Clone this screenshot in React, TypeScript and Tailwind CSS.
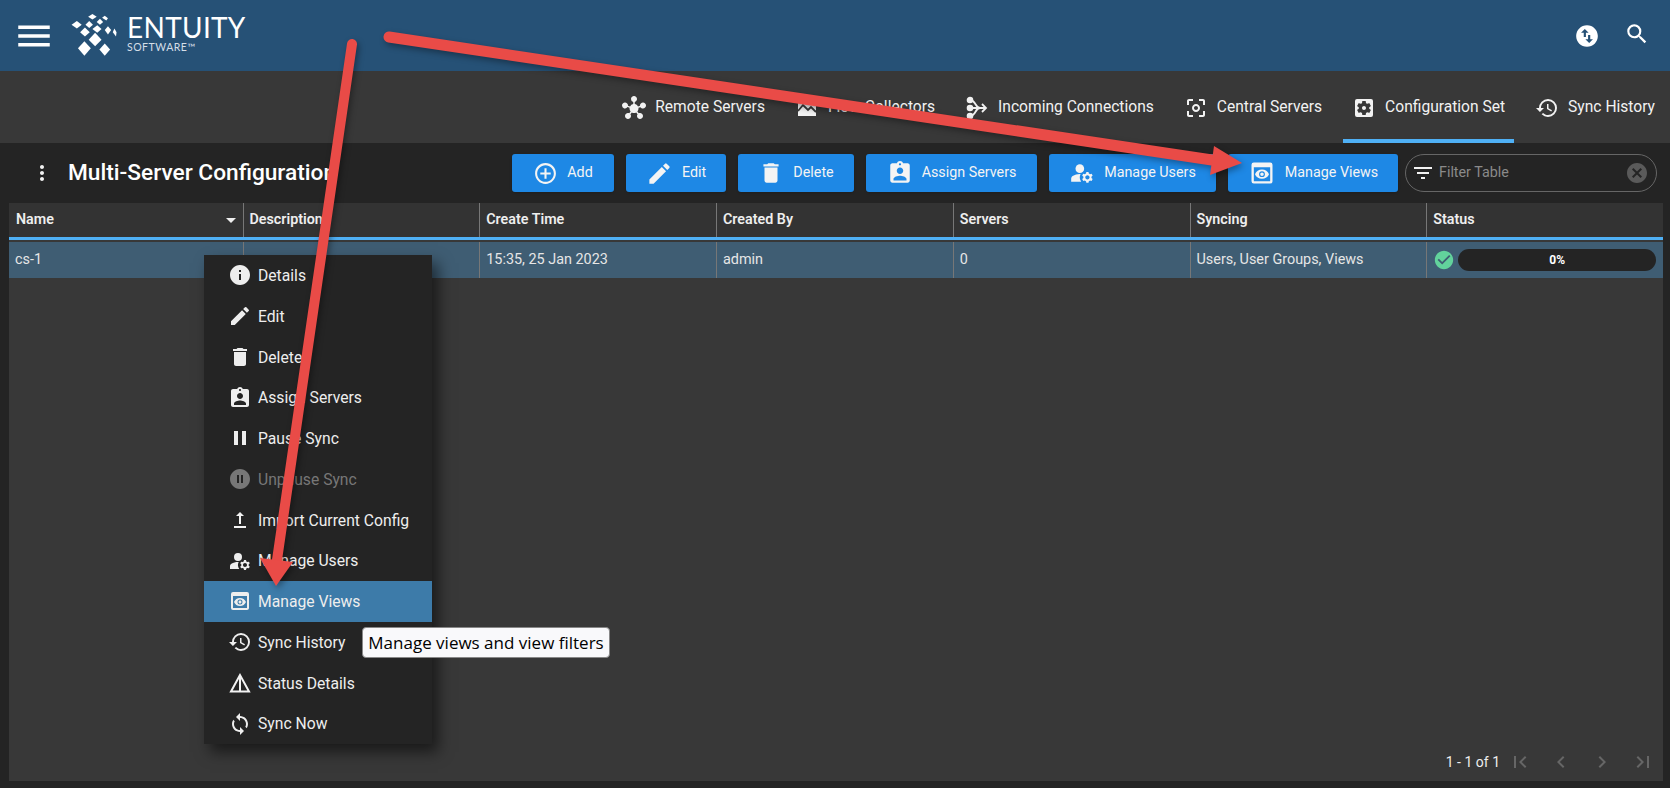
import type { ReactNode } from 'react';
import {
  MdMenu,
  MdSwapVerticalCircle,
  MdSearch,
  MdHub,
  MdCenterFocusWeak,
  MdSettingsApplications,
  MdHistory,
  MdMoreVert,
  MdAddCircleOutline,
  MdEdit,
  MdDelete,
  MdAssignmentInd,
  MdManageAccounts,
  MdPreview,
  MdFilterList,
  MdCancel,
  MdArrowDropDown,
  MdCheckCircle,
  MdInfo,
  MdPause,
  MdPauseCircleFilled,
  MdSync,
  MdFirstPage,
  MdLastPage,
  MdChevronLeft,
  MdChevronRight,
} from 'react-icons/md';

const FlowIcon = () => (
  <svg viewBox="0 0 24 24" className="w-6 h-6">
    <path d="M3 4h18v16H3z" fill="#f2f2f2" />
    <path d="M3 15l5-6 5 5 3-3 5 5" fill="none" stroke="#383838" strokeWidth="1.8" />
  </svg>
);

const IncomingIcon = () => (
  <svg viewBox="0 0 24 24" className="w-6 h-6" fill="none" stroke="#f2f2f2" strokeWidth="1.8">
    <circle cx="5" cy="4" r="2.4" fill="#f2f2f2" />
    <circle cx="5" cy="12" r="2.4" fill="#f2f2f2" />
    <circle cx="5" cy="20" r="2.4" fill="#f2f2f2" />
    <path d="M5 4c6 0 5 8 10 8M5 20c6 0 5-8 10-8M5 12h16M17 8l4 4-4 4" />
  </svg>
);

const ImportIcon = () => (
  <svg viewBox="0 0 24 24" className="w-6 h-6" fill="#f2f2f2">
    <path d="M12 4l-4 4h3v8h2V8h3z" />
    <path d="M6 18h12v2H6z" />
  </svg>
);

const StatusIcon = () => (
  <svg viewBox="0 0 24 24" className="w-6 h-6" fill="none" stroke="#f2f2f2" strokeWidth="2">
    <path d="M12 4L3 20.500h18zM12 5v15" />
  </svg>
);

const Logo = () => (
  <svg viewBox="0 0 60 56" className="w-[65px] h-[60px]" fill="#fff">
    <path d="M21.500 33l6 6.500-6 7-6-7z" />
    <path d="M40.500 35l5 5.500-5 6-5-6z" />
    <path d="M31.500 25l6 6.500-6 6-6-6z" />
    <path d="M22 20l4.500 4.500-4.500 4-4.500-4z" />
    <path d="M33.500 18l4 3.500-4 3.500-4.500-3.500z" />
    <path d="M43.500 19l3 3.500-3 4-3-4z" />
    <path d="M14.500 14l4.500 3.500-4.500 3.500-5-3.500z" />
    <path d="M26 14l3.500 3.500-3.500 3-3.500-3z" />
    <path d="M36 12l3 3-3 2.500-3-2.500z" />
    <path d="M49.500 21l2 3.500-.5 4-3-4z" />
    <path d="M29 7.500l4 2.500-4 2.500-4-2.500z" />
    <path d="M40.500 9l3 2.500-1.500 2-4-2.500z" />
  </svg>
);

const tabs = [
  { label: 'Remote Servers', icon: <MdHub size={24} /> },
  { label: 'Flow Collectors', icon: <FlowIcon /> },
  { label: 'Incoming Connections', icon: <IncomingIcon /> },
  { label: 'Central Servers', icon: <MdCenterFocusWeak size={24} /> },
  { label: 'Configuration Set', icon: <MdSettingsApplications size={24} />, active: true },
  { label: 'Sync History', icon: <MdHistory size={24} /> },
];

const buttons = [
  { label: 'Add', icon: <MdAddCircleOutline size={25} />, w: 'w-[102px]' },
  { label: 'Edit', icon: <MdEdit size={27} />, w: 'w-[100px]' },
  { label: 'Delete', icon: <MdDelete size={26} />, w: 'w-[116px]' },
  { label: 'Assign Servers', icon: <MdAssignmentInd size={26} />, w: 'w-[171px]' },
  { label: 'Manage Users', icon: <MdManageAccounts size={26} />, w: 'w-[167px]' },
  { label: 'Manage Views', icon: <MdPreview size={28} />, w: 'w-[170px]' },
];

const columns = ['Name', 'Description', 'Create Time', 'Created By', 'Servers', 'Syncing', 'Status'];

const menu: { label: string; icon: ReactNode; disabled?: boolean; hover?: boolean }[] = [
  { label: 'Details', icon: <MdInfo size={24} /> },
  { label: 'Edit', icon: <MdEdit size={24} /> },
  { label: 'Delete', icon: <MdDelete size={24} /> },
  { label: 'Assign Servers', icon: <MdAssignmentInd size={24} /> },
  { label: 'Pause Sync', icon: <MdPause size={24} /> },
  { label: 'Unpause Sync', icon: <MdPauseCircleFilled size={24} />, disabled: true },
  { label: 'Import Current Config', icon: <ImportIcon /> },
  { label: 'Manage Users', icon: <MdManageAccounts size={24} /> },
  { label: 'Manage Views', icon: <MdPreview size={24} />, hover: true },
  { label: 'Sync History', icon: <MdHistory size={24} /> },
  { label: 'Status Details', icon: <StatusIcon /> },
  { label: 'Sync Now', icon: <MdSync size={24} /> },
];

const Cell = ({ children, first }: { children?: ReactNode; first?: boolean }) => (
  <div className={`flex items-center min-w-0 pl-[6px] ${first ? '' : 'border-l border-[#777]'}`}>{children}</div>
);

export default function App() {
  return (
    <div className="relative w-[1670px] h-[788px] overflow-hidden flex flex-col bg-[#242424] text-[#f2f2f2] font-['Roboto',sans-serif]">
      {/* Top header */}
      <header className="h-[71px] shrink-0 bg-[#265176] flex items-center pl-[13px] pr-[20px]">
        <MdMenu size={42} className="text-white" />
        <div className="ml-[6px]"><Logo /></div>
        <div className="ml-[1px] -mt-1 flex flex-col leading-none font-['Lato',sans-serif] text-white">
          <span className="text-[28px] leading-[28px] tracking-[0.3px]">ENTUITY</span>
          <span className="text-[10.500px] leading-[13px] text-[#d5dfe8] tracking-[0.5px]">SOFTWARE™</span>
        </div>
        <div className="ml-auto flex items-center gap-[24px] text-white">
          <MdSwapVerticalCircle size={26} />
          <MdSearch size={26} className="-mt-[4px]" />
        </div>
      </header>

      {/* Tabs */}
      <nav className="h-[72px] shrink-0 bg-[#383838] flex justify-end items-stretch">
        {tabs.map((t) => (
          <div
            key={t.label}
            className={`flex items-center gap-[9px] px-[9px] pt-[6px] border-b-4 mx-[6px] text-[15.600px] ${t.active ? 'border-[#4fb0f5]' : 'border-transparent'}`}
          >
            {t.icon}
            <span>{t.label}</span>
          </div>
        ))}
      </nav>

      {/* Toolbar */}
      <div className="h-[60px] shrink-0 flex items-center pl-[30px] pr-[13px]">
        <MdMoreVert size={24} />
        <h1 className="ml-[14px] text-[22.700px] font-medium text-white">Multi-Server Configuration</h1>
        <div className="ml-auto flex items-center gap-3">
          {buttons.map((b) => (
            <button
              key={b.label}
              className={`${b.w} h-[38px] flex items-center justify-center gap-[9px] rounded-[3px] bg-[#1e88e5] text-[14.300px] text-[#f4f4f4] shadow`}
            >
              {b.icon}
              {b.label}
            </button>
          ))}
        </div>
        <div className="ml-[7px] w-[252px] h-[38px] flex items-center rounded-full border border-[#666] pl-[5px] pr-[7px]">
          <MdFilterList size={24} />
          <span className="ml-[4px] text-[14.300px] text-[#8a8a8a]">Filter Table</span>
          <MdCancel size={24} className="ml-auto text-[#5a5a5a]" />
        </div>
      </div>

      {/* Table */}
      <main className="flex-1 ml-[9px] mr-[7px] mb-[7px] bg-[#383838] flex flex-col min-h-0">
        <div className="h-[37px] shrink-0 bg-[#333] border-b-[3px] border-[#4fb0f5] grid grid-cols-[233.500px_repeat(6,1fr)] text-[14.300px] font-semibold text-[#eee]">
          {columns.map((c, i) => (
            <Cell key={c} first={i === 0}>
              <span className={i === 0 ? 'ml-px' : ''}>{c}</span>
              {i === 0 && <MdArrowDropDown size={24} className="ml-auto" />}
            </Cell>
          ))}
        </div>
        <div className="mt-[2px] h-[36px] shrink-0 bg-[#3f5d73] grid grid-cols-[233.500px_repeat(6,1fr)] text-[14.400px] text-[#e6e6e6]">
          <Cell first>cs-1</Cell>
          <Cell />
          <Cell>15:35, 25 Jan 2023</Cell>
          <Cell>admin</Cell>
          <Cell>0</Cell>
          <Cell>Users, User Groups, Views</Cell>
          <Cell>
            <MdCheckCircle size={22} className="text-[#62d29c] shrink-0" />
            <div className="ml-[3px] w-[198px] h-[22px] rounded-full bg-[#242424] flex items-center justify-center text-[12px] font-bold text-white">0%</div>
          </Cell>
        </div>
        <div className="mt-auto h-[38px] flex items-center justify-end text-[14px] text-[#eee] pr-[8px]">
          <span>1 - 1 of 1</span>
          <div className="ml-[8px] flex items-center gap-[17px] text-[#666]">
            <MdFirstPage size={24} />
            <MdChevronLeft size={24} />
            <MdChevronRight size={24} />
            <MdLastPage size={24} />
          </div>
        </div>
      </main>

      {/* Row context menu */}
      <div className="absolute left-[204px] top-[255px] w-[228px] bg-[#242424] shadow-[6px_8px_14px_rgba(0,0,0,0.55)] text-[15.700px]">
        {menu.map((m) => (
          <div
            key={m.label}
            className={`h-[40.750px] flex items-center gap-[6px] pl-[24px] ${m.hover ? 'bg-[#3d7ba9]' : ''} ${m.disabled ? 'text-[#777]' : 'text-[#eee]'}`}
          >
            {m.icon}
            <span className="pt-px">{m.label}</span>
          </div>
        ))}
      </div>

      {/* Tooltip */}
      <div className="absolute left-[362px] top-[627px] w-[248px] h-[31px] flex items-center justify-center rounded-[4px] border border-[#888] bg-[#f9f9fb] text-black text-[17px] font-['Open_Sans',sans-serif] whitespace-nowrap">
        Manage views and view filters
      </div>

      {/* Annotation arrows */}
      <svg className="absolute inset-0 w-full h-full pointer-events-none drop-shadow-[2px_3px_3px_rgba(0,0,0,0.35)]" viewBox="0 0 1670 788">
        <path d="M389 37L1212 160" stroke="#e94b47" strokeWidth="11" strokeLinecap="round" />
        <path d="M1242 163L1214 146L1210 175Z" fill="#e94b47" />
        <path d="M352 44L277 560" stroke="#e94b47" strokeWidth="10" strokeLinecap="round" />
        <path d="M276 586L260 558L293 562Z" fill="#e94b47" />
      </svg>
    </div>
  );
}
